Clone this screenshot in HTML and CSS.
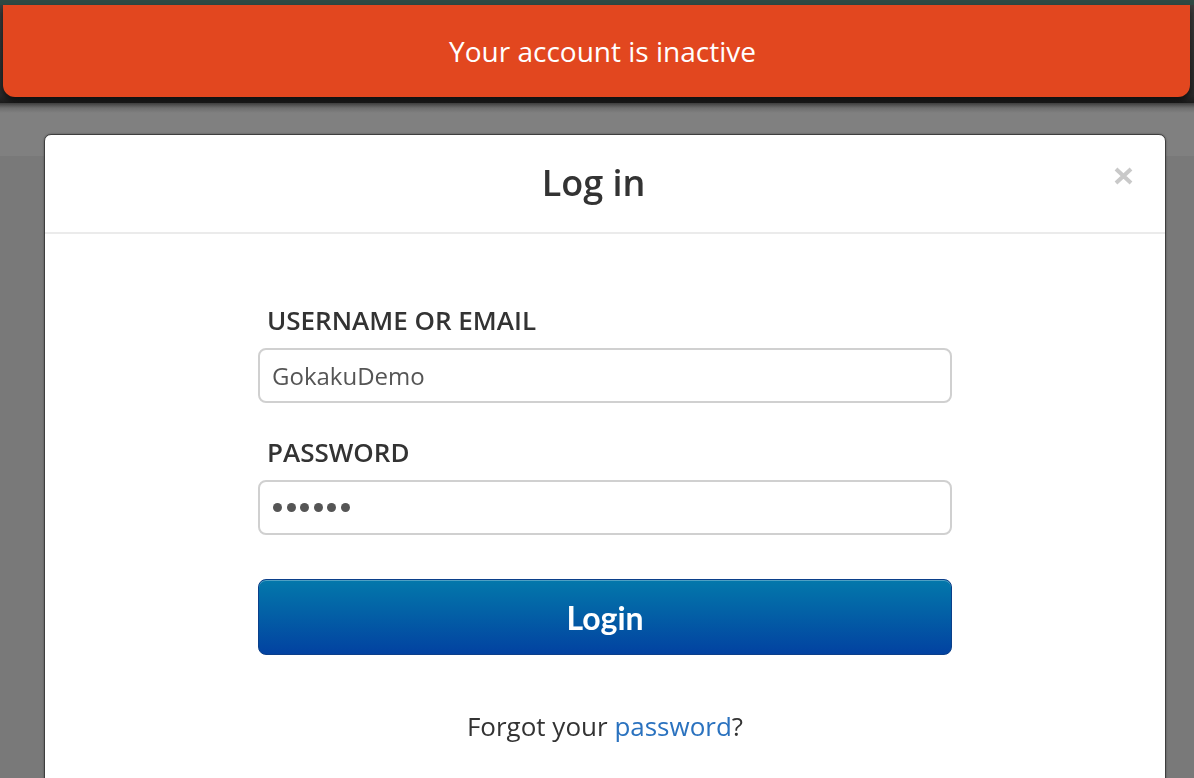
FILE: index.html
```html
<!DOCTYPE html>
<html>
<head>
<meta charset="utf-8">
<link rel="stylesheet" href="styles.css">
</head>
<body>
<div class="page">
  <div class="topbar">
    <div class="alert">Your account is inactive</div>
  </div>
  <div class="subbar"></div>
</div>
<div class="overlay">
  <div class="modal">
    <div class="modal-header">
      <h4 class="modal-title">Log in</h4>
      <button class="close" aria-label="Close">
        <svg width="19" height="18" viewBox="0 0 19 18"><path d="M2 2 L17 16 M17 2 L2 16" stroke="#c9c9c9" stroke-width="4" fill="none"/></svg>
      </button>
    </div>
    <div class="modal-body">
      <form class="form">
        <label class="label">USERNAME OR EMAIL</label>
        <div class="input">GokakuDemo</div>
        <label class="label">PASSWORD</label>
        <div class="input dots"><span></span><span></span><span></span><span></span><span></span><span></span></div>
        <button class="btn" type="button">Login</button>
        <p class="forgot">Forgot your <a href="#">password</a>?</p>
      </form>
    </div>
  </div>
</div>
</body>
</html>
```
FILE: styles.css
```css
html, body {
  margin: 0;
  padding: 0;
  height: 100%;
  overflow: hidden;
}
body {
  background: #797979;
  font-family: "Open Sans", "Liberation Sans", sans-serif;
  color: #333;
}
.page {
  display: flex;
  flex-direction: column;
}
.topbar {
  padding-top: 5px;
  padding-left: 3px;
  padding-right: 4px;
  background: linear-gradient(to bottom, #2f4a44 0, #2f4a44 5px, #3c3c3c 5px, #2a2a2a 95px, #1c1c1c 100%);
  height: 103px;
  box-sizing: border-box;
}
.alert {
  background: #e2471f;
  color: #fff;
  height: 92px;
  border-radius: 0 0 12px 12px;
  display: flex;
  align-items: center;
  justify-content: center;
  font-size: 28px;
  padding-left: 12px;
  box-shadow: 0 4px 6px rgba(0,0,0,0.6);
}
.subbar {
  height: 53px;
  background: linear-gradient(to bottom, #3d3d3d 0, #6e6e6e 5px, #808080 10px, #808080 100%);
}
.overlay {
  position: fixed;
  inset: 0;
  padding: 134px 28px 0 44px;
}
.modal {
  background: #fff;
  border: 1px solid #3e3e3e;
  border-radius: 7px;
  height: 700px;
  box-shadow: 0 0 2px rgba(0,0,0,0.4);
}
.modal-header {
  position: relative;
  height: 97px;
  border-bottom: 2px solid #ebebeb;
  display: flex;
  align-items: center;
  justify-content: center;
  padding-right: 23px;
}
.modal-title {
  margin: 0;
  font-size: 36px;
  font-weight: 600;
  color: #333;
  line-height: 1;
  padding-bottom: 2px;
}
.close {
  position: absolute;
  right: 32px;
  top: 32px;
  background: none;
  border: 0;
  padding: 0;
  width: 19px;
  height: 18px;
  display: block;
}
.modal-body {
  display: flex;
  justify-content: center;
  padding-top: 69px;
}
.form {
  width: 694px;
  display: flex;
  flex-direction: column;
  margin: 0;
}
.label {
  font-size: 26px;
  font-weight: 600;
  color: #333;
  padding-left: 9px;
  line-height: 34px;
  margin-bottom: 11px;
}
.input {
  height: 55px;
  box-sizing: border-box;
  border: 2px solid #d0d0d0;
  border-radius: 8px;
  padding-left: 12px;
  display: flex;
  align-items: center;
  font-size: 24px;
  color: #555;
  margin-bottom: 32px;
}
.dots {
  gap: 4.5px;
  padding-left: 13px;
  margin-bottom: 44px;
}
.dots span {
  width: 9px;
  height: 9px;
  border-radius: 50%;
  background: #555;
}
.btn {
  height: 76px;
  border: 1px solid #0b3f8a;
  border-radius: 8px;
  background: linear-gradient(to bottom, #0378ab 0%, #0360a6 45%, #0242a1 100%);
  box-shadow: inset 0 1px 0 rgba(255,255,255,0.3);
  color: #fff;
  font-family: "Lato", "Open Sans", sans-serif;
  font-weight: 700;
  font-size: 32px;
  padding: 0;
  cursor: pointer;
}
.forgot {
  margin: 53px 0 0;
  text-align: center;
  font-size: 26px;
  color: #333;
}
.forgot a {
  color: #2a72bf;
  text-decoration: none;
}
```
